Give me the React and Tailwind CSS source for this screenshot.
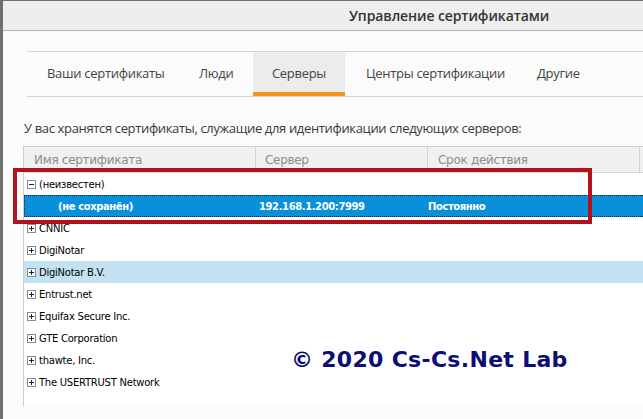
import React from 'react';

const tabs = [
  { label: 'Ваши сертификаты', cls: 'w-[154px] pl-[20px]' },
  { label: 'Люди', cls: 'w-[72px] pl-[18px]' },
  { label: 'Серверы', cls: 'w-[92px] justify-center', active: true },
  { label: 'Центры сертификации', cls: 'w-[180px] pl-[21px]' },
  { label: 'Другие', cls: 'pl-[12px]' },
];

const roots = [
  'CNNIC',
  'DigiNotar',
  'DigiNotar B.V.',
  'Entrust.net',
  'Equifax Secure Inc.',
  'GTE Corporation',
  'thawte, Inc.',
  'The USERTRUST Network',
];

const Expander = ({ open }) => (
  <svg width="9" height="9" viewBox="0 0 9 9" className="shrink-0">
    <rect x="0.5" y="0.5" width="8" height="8" fill="#fff" stroke="#7f8d9c" />
    <line x1="2" y1="4.5" x2="7" y2="4.5" stroke="#222" />
    {!open && <line x1="4.5" y1="2" x2="4.5" y2="7" stroke="#222" />}
  </svg>
);

const App = () => {
  return (
    <div className="w-[643px] h-[419px] overflow-hidden relative bg-[#fbfbfb] border-t border-l-[3px] border-[#6f6f6f] font-['Open_Sans',sans-serif]">
      {/* TITLE BAR */}
      <div className="h-[30px] bg-[#eeeeee] border-b border-[#b4b4b4] flex items-center">
        <div className="ml-[346px] text-[14px] font-semibold text-[#333] tracking-[-0.1px]">Управление сертификатами</div>
      </div>

      <div className="pl-[20px]">
        {/* TABS */}
        <div className="ml-[4px] mt-[20px] h-[46px] border-t border-b border-[#d2d2d2] flex text-[13px] text-[#444] tracking-[-0.3px]">
          {tabs.map((t) => (
            <div
              key={t.label}
              className={`flex items-center h-full ${t.cls} ${t.active ? 'bg-[#ececec] border-b-[4px] border-[#f7941d] pt-[4px]' : ''}`}
            >
              {t.label}
            </div>
          ))}
        </div>

        <div className="mt-[22px] ml-[1px] text-[13px] text-[#3a3a3a] tracking-[-0.35px] leading-[18px]">
          У вас хранятся сертификаты, служащие для идентификации следующих серверов:
        </div>

        {/* TABLE */}
        <div className="mt-[9px] w-[640px] h-[260px] border-t border-l border-[#cfcfcf] bg-white font-['DejaVu_Sans',sans-serif] text-[10px] tracking-[-0.25px] text-black">
          <div className="h-[26px] bg-[#f0f0f0] border-b border-[#d6d6d6] flex items-center text-[12px] text-[#8c8c8c] tracking-[-0.3px]">
            <div className="w-[232px] h-full flex items-center pl-[10px] border-r border-[#d0d0d0]">Имя сертификата</div>
            <div className="w-[172px] h-full flex items-center pl-[9px] border-r border-[#d0d0d0]">Сервер</div>
            <div className="w-[212px] h-full flex items-center pl-[10px] border-r border-[#d0d0d0]">Срок действия</div>
          </div>

          <div className="h-[22px] flex items-center gap-[3px] pl-[3px]">
            <Expander open />
            <span>(неизвестен)</span>
          </div>
          <div className="h-[22px] flex items-center bg-[#0a90d9] border border-dotted border-[#0b2a5c] text-white font-bold tracking-[-0.4px]">
            <div className="w-[232px] pl-[33px]">(не сохранён)</div>
            <div className="w-[171px] pl-[2px]">192.168.1.200:7999</div>
            <div>Постоянно</div>
          </div>
          {roots.map((r) => (
            <div
              key={r}
              className={`h-[22px] flex items-center gap-[3px] pl-[3px] ${r === 'DigiNotar B.V.' ? 'bg-[#c3e3f3]' : ''}`}
            >
              <Expander />
              <span>{r}</span>
            </div>
          ))}
        </div>
      </div>

      {/* HIGHLIGHT FRAME */}
      <div className="absolute left-[10px] top-[167px] w-[579px] h-[56px] border-[4px] border-[#b2121b]" />

      {/* WATERMARK */}
      <div className="absolute left-[288px] top-[342px] text-[22px] font-bold text-[#0d0d78] font-['DejaVu_Sans',sans-serif] tracking-[0.3px]">
        © 2020 Cs-Cs.Net Lab
      </div>
    </div>
  );
};

export default App;
